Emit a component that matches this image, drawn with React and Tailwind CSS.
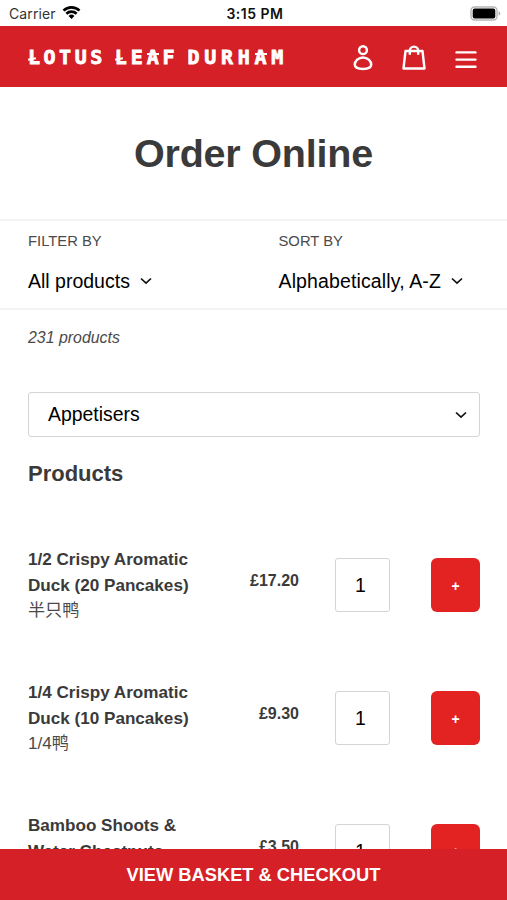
import React, { useState } from "react";

const products = [
  { id: 1, name: ["1/2 Crispy Aromatic", "Duck (20 Pancakes)"], alt: "半只鸭", price: "£17.20" },
  { id: 2, name: ["1/4 Crispy Aromatic", "Duck (10 Pancakes)"], alt: "1/4鸭", price: "£9.30" },
  { id: 3, name: ["Bamboo Shoots &", "Water Chestnuts"], alt: "", price: "£3.50" },
];

const Chevron = () => (
  <svg width="12" height="8" viewBox="0 0 12 8" fill="none" stroke="#111" strokeWidth="1.7">
    <path d="M1 1.5 6 6.2 11 1.5" />
  </svg>
);

const StatusBar = () => (
  <div className="h-[26px] shrink-0 pl-[9px] pr-[6px] grid grid-cols-3 items-center font-['Inter',sans-serif] text-[14px] text-[#111]">
    <div className="flex items-center gap-[6px]">
      <span className="text-[#333] tracking-[0.1px]">Carrier</span>
      <svg className="-mt-[2px]" width="19" height="15" viewBox="0 0 20 15" fill="none" stroke="#000" strokeWidth="2.8">
        <path d="M1.6 5.5a12 12 0 0 1 16.8 0" />
        <path d="M4.6 8.8a7.7 7.7 0 0 1 10.8 0" />
        <path d="M10 14.3 6.9 11.1a4.5 4.5 0 0 1 6.2 0Z" fill="#000" stroke="none" />
      </svg>
    </div>
    <span className="text-center font-semibold tracking-[0.5px] whitespace-nowrap">3:15 PM</span>
    <svg className="justify-self-end" width="31" height="15" viewBox="0 0 31 15">
      <rect x="1" y="1" width="26" height="13" rx="3.5" fill="#fff" stroke="#b5b5b5" strokeWidth="1.4" />
      <rect x="2.7" y="2.5" width="22.6" height="10" rx="2" fill="#000" />
      <path d="M28.6 5.3q1.6.6 1.6 2.2t-1.6 2.2Z" fill="#aaa" />
    </svg>
  </div>
);

// Brush tick across the stem of each L
const TickL = () => (
  <span className="relative before:absolute before:left-0 before:top-[13px] before:w-[8px] before:h-[2px] before:bg-white before:-rotate-12">
    L
  </span>
);

// Roof stroke that gives the A its pagoda look
const PagodaA = () => (
  <span className="relative before:absolute before:left-0 before:top-[8px] before:w-[12px] before:h-[2px] before:bg-white">
    A
  </span>
);

const Header = () => (
  <header className="h-[61px] shrink-0 bg-[#d42026] pl-7 pr-[30px] flex items-center justify-between text-white">
    <div className="flex gap-[9px] font-['DejaVu_Sans_Mono',monospace] font-bold text-[20px] leading-none [-webkit-text-stroke:0.8px_white]">
      <span className="tracking-[3.5px]"><TickL />OTUS</span>
      <span className="tracking-[3.9px]"><TickL />E<PagodaA />F</span>
      <span className="tracking-[4.7px]">DURH<PagodaA />M</span>
    </div>
    <div className="flex items-center pt-[2px]">
      <svg width="20" height="26" viewBox="0 0 20 26" fill="none" stroke="currentColor" strokeWidth="2.5">
        <circle cx="10" cy="5.2" r="3.9" />
        <path d="M10 12.4c-4.5 0-8.2 3.6-8.2 7.2 0 3.3 2.7 4.4 8.2 4.4s8.2-1.1 8.2-4.4c0-3.6-3.7-7.2-8.2-7.2Z" />
      </svg>
      <svg className="ml-[29px]" width="24" height="26" viewBox="0 0 24 26" fill="none" stroke="currentColor" strokeWidth="2.4">
        <path d="M3.5 6h17l2 17.5h-21Z" strokeLinejoin="round" />
        <path d="M7.8 9.8V5.8a4.2 4.2 0 0 1 8.4 0v4" />
      </svg>
      <svg className="ml-[29px]" width="22" height="26" viewBox="0 0 22 26" fill="none" stroke="currentColor" strokeWidth="2.4" strokeLinecap="round">
        <path d="M1.5 7.4h19M1.5 14.6h19M1.5 21.8h19" />
      </svg>
    </div>
  </header>
);

const Filter = ({ label, value, tracking = "" }) => (
  <div>
    <div className="text-[14.8px] leading-[20px] uppercase text-[#4a4a4a]">{label}</div>
    <button className={`mt-[18px] flex items-center gap-[10px] text-[19.5px] leading-[24px] text-black whitespace-nowrap ${tracking}`}>
      {value}
      <Chevron />
    </button>
  </div>
);

const ProductRow = ({ product }) => {
  const [qty, setQty] = useState(1);

  return (
    <div className="h-[133px] flex items-start">
      <div className="w-[181px] text-[17.1px] leading-[25.7px]">
        {product.name.map((line) => (
          <div key={line} className="font-bold whitespace-nowrap">{line}</div>
        ))}
        <div className="text-[#4a4a4a] font-['Liberation_Sans','Noto_Sans_CJK_SC',sans-serif]">{product.alt}</div>
      </div>
      <div className="w-[90px] pt-[22px] text-right font-bold text-[16px] leading-[24px]">{product.price}</div>
      <input
        value={qty}
        onChange={(e) => setQty(e.target.value)}
        className="ml-[36px] mt-[11px] w-[55px] h-[54px] border border-[#d4d4d4] rounded-[3px] pl-[19px] text-[19.5px] text-black"
      />
      <button className="ml-[41px] mt-[11px] w-[49px] h-[54px] rounded-[6px] bg-[#e32222] text-white font-bold text-[14px] pt-[3px]">
        +
      </button>
    </div>
  );
};

export default function App() {
  return (
    <div className="w-full h-[900px] overflow-hidden flex flex-col bg-white text-[#3a3a3a] font-['Liberation_Sans',Arial,sans-serif]">
      <StatusBar />
      <Header />
      <main className="flex-1 min-h-0 overflow-hidden">
        <div className="h-[132px] pt-[2px] flex items-center justify-center">
          <h1 className="text-[39.5px] leading-none font-bold tracking-[-0.2px]">Order Online</h1>
        </div>

        <div className="h-[91px] border-y-2 border-[#f3f3f3] px-7 pt-[10px] grid grid-cols-[250.5px_1fr]">
          <Filter label="Filter by" value="All products" />
          <Filter label="Sort by" value="Alphabetically, A-Z" tracking="tracking-[0.13px]" />
        </div>

        <div className="pl-7 pr-[27px]">
          <p className="pt-[16px] italic text-[15.9px] leading-[24px] text-[#4a4a4a]">231 products</p>
          <button className="mt-[42px] w-full h-[45px] border border-[#d4d4d4] rounded-[3px] pl-[19px] pr-[12px] flex items-center justify-between text-[19.4px] text-black">
            Appetisers
            <Chevron />
          </button>
          <h2 className="mt-[23px] text-[22px] leading-[28px] font-bold">Products</h2>
          <div className="mt-[59px]">
            {products.map((p) => (
              <ProductRow key={p.id} product={p} />
            ))}
          </div>
        </div>
      </main>
      <button className="h-[51px] shrink-0 bg-[#d42026] text-white font-bold text-[18.3px]">
        VIEW BASKET &amp; CHECKOUT
      </button>
    </div>
  );
}
